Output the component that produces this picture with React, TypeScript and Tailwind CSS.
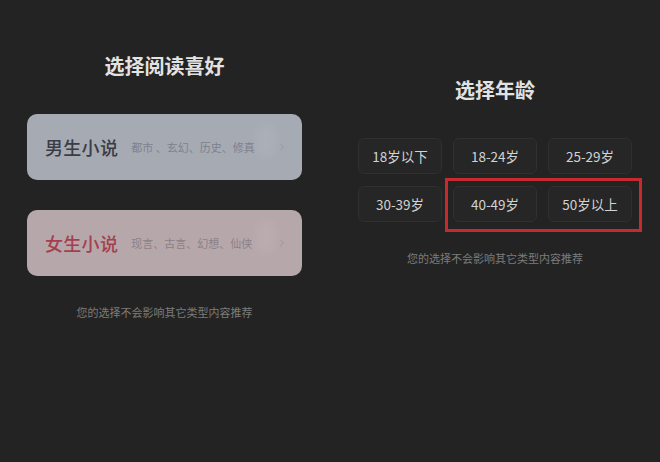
import { ChevronRight } from "lucide-react";

const FONT = { fontFamily: '"Noto Sans CJK SC", "Noto Sans", sans-serif' };

const GENRES = [
  {
    title: "男生小说",
    tags: "都市 、玄幻、历史、修真",
    card: "bg-[#a6aab3]",
    titleColor: "text-[#3a3d45]",
    tagColor: "text-[#7d828c]",
  },
  {
    title: "女生小说",
    tags: "现言、古言、幻想、仙侠",
    card: "bg-[#b6a7ab]",
    titleColor: "text-[#a53f4f]",
    tagColor: "text-[#8c8085]",
  },
];

const AGES = ["18岁以下", "18-24岁", "25-29岁", "30-39岁", "40-49岁", "50岁以上"];

function GenreCard({ g }: { g: (typeof GENRES)[number] }) {
  return (
    <div className={`relative flex h-[66px] items-center overflow-hidden rounded-[10px] pl-[18px] pr-[14px] ${g.card}`}>
      <span className={`text-[18px] font-medium leading-none tracking-[0.3px] ${g.titleColor}`}>{g.title}</span>
      <span className={`ml-[13px] text-[11px] leading-none ${g.tagColor}`}>{g.tags}</span>
      <span className="absolute right-[26px] top-[10px] h-[34px] w-[20px] rounded-full bg-white/[0.06] blur-[4px]" />
      <ChevronRight className="ml-auto h-3 w-3 text-[#8d929b]" strokeWidth={1.5} />
    </div>
  );
}

export default function App() {
  return (
    <div className="flex h-[462px] w-[660px] bg-[#232323]" style={FONT}>
      <section className="w-[330px] pl-[27px] pr-[28px] pt-[52px]">
        <h2 className="text-center text-[20px] font-bold leading-[28px] text-[#e2e2e2]">选择阅读喜好</h2>
        <div className="mt-[34px] flex flex-col gap-[30px]">
          {GENRES.map((g) => (
            <GenreCard key={g.title} g={g} />
          ))}
        </div>
        <p className="mt-[28px] text-center text-[11px] leading-[16px] text-[#7c7c7c]">
          您的选择不会影响其它类型内容推荐
        </p>
      </section>

      <section className="w-[330px] pl-[28px] pt-[76px]">
        <h2 className="w-[274px] text-center text-[20px] font-bold leading-[28px] text-[#e2e2e2]">选择年龄</h2>
        <div className="relative mt-[34px] grid w-[274px] grid-cols-3 gap-x-[11px] gap-y-[12px]">
          {AGES.map((a) => (
            <div
              key={a}
              className="flex h-[36px] items-center justify-center rounded-[6px] border border-[#303030] bg-[#262626] text-[13.5px] text-[#d2d2d2]"
            >
              {a}
            </div>
          ))}
          <div className="pointer-events-none absolute left-[87px] top-[40px] h-[54px] w-[197px] border-[3px] border-[#c42a2e]" />
        </div>
        <p className="mt-[28px] w-[274px] text-center text-[11px] leading-[16px] text-[#7c7c7c]">
          您的选择不会影响其它类型内容推荐
        </p>
      </section>
    </div>
  );
}
